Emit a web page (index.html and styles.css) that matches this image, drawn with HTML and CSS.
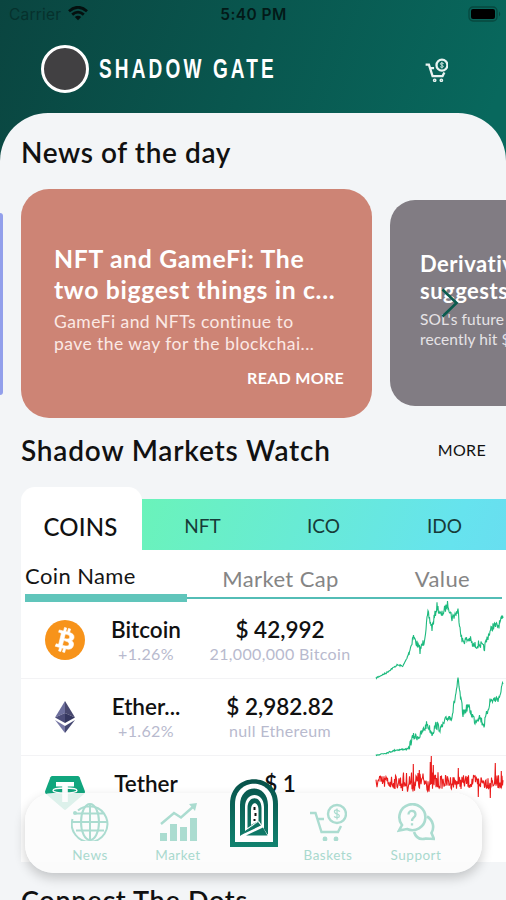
FILE: index.html
```html
<!DOCTYPE html>
<html lang="en">
<head>
<meta charset="utf-8">
<title>Shadow Gate</title>
<link rel="stylesheet" href="styles.css">
</head>
<body>
<div class="app">
  <div class="status">
    <div class="carrier"><span>Carrier</span>
      <svg width="20" height="15" viewBox="0 0 20 15" fill="none" stroke="#04100f" stroke-width="2.8"><path d="M1 5.2Q10-2.600 19 5.200M4.200 8.600Q10 3.600 15.800 8.600"/><path d="M10 14.200L6.800 11Q10 8.300 13.200 11Z" fill="#04100f" stroke="none"/></svg>
    </div>
    <div class="clock">5:40 PM</div>
    <svg class="battery" width="34" height="16" viewBox="0 0 34 16"><rect x="1" y="1" width="28" height="14" rx="4" fill="none" stroke="#07483f" stroke-width="1.300"/><rect x="3" y="3" width="24" height="10" rx="2" fill="#000"/><path d="M31 5.500q2.500 2.500 0 5z" fill="#07483f"/></svg>
  </div>
  <header class="header">
    <div class="avatar"></div>
    <div class="brand"><span>SHADOW GATE</span></div>
    <svg class="cart" width="23" height="24" viewBox="0 0 38 38" fill="none" stroke="#e9f3f1" stroke-width="3.800"><use href="#cart"/></svg>
  </header>
  <main class="sheet">
    <h2 class="title news-title">News of the day</h2>
    <section class="carousel">
      <article class="card prev"></article>
      <article class="card current">
        <h3>NFT and GameFi: The<br>two biggest things in c...</h3>
        <p>GameFi and NFTs continue to<br>pave the way for the blockchai...</p>
        <a>READ MORE</a>
      </article>
      <article class="card next">
        <h3>Derivativ<br>suggests</h3>
        <p>SOL's future<br>recently hit $</p>
        <svg class="arrow" width="18" height="30" viewBox="0 0 18 30" fill="none" stroke="#0b5b4e" stroke-width="2.600"><path d="M1.500 1.500L15.500 15L1.500 28.500"/></svg>
      </article>
    </section>
    <div class="markets-head"><h2 class="title">Shadow Markets Watch</h2><a>MORE</a></div>
    <section class="market">
      <div class="tabs">
        <div class="tab active">COINS</div>
        <div class="others"><div>NFT</div><div>ICO</div><div>IDO</div></div>
      </div>
      <div class="cols">
        <div class="col on">Coin Name</div><div class="col cap">Market Cap</div><div class="col val">Value</div>
      </div>
      <div class="row">
        <div class="logo"><svg width="40" height="40" viewBox="0 0 32 32"><circle cx="16" cy="16" r="16" fill="#f7931a"/><path fill="#fff" stroke="#fff" stroke-width=".5" d="M23.189 14.020c.314-2.096-1.283-3.223-3.465-3.975l.708-2.840-1.728-.430-.690 2.765c-.454-.114-.920-.220-1.385-.326l.695-2.783L15.596 6l-.708 2.839c-.376-.086-.746-.170-1.104-.260l.002-.009-2.384-.595-.460 1.846s1.283.294 1.256.312c.700.175.826.638.805 1.006l-.806 3.235c.048.012.110.030.180.057l-.183-.045-1.130 4.532c-.086.212-.303.531-.793.410.018.025-1.256-.313-1.256-.313l-.858 1.978 2.250.561c.418.105.828.215 1.231.318l-.715 2.872 1.727.430.708-2.840c.472.127.930.245 1.378.357l-.706 2.828 1.728.430.715-2.866c2.948.558 5.164.333 6.097-2.333.752-2.146-.037-3.385-1.588-4.192 1.130-.260 1.980-1.003 2.207-2.538zm-3.950 5.538c-.533 2.147-4.148.986-5.320.695l.950-3.805c1.172.293 4.929.872 4.370 3.110zm.535-5.569c-.487 1.953-3.495.960-4.470.717l.860-3.450c.975.243 4.118.696 3.610 2.733z"/></svg></div>
        <div class="name"><b>Bitcoin</b><i>+1.26%</i></div>
        <div class="price"><b>$ 42,992</b><i>21,000,000 Bitcoin</i></div>
        <svg class="chart" data-coin="btc" width="128" height="78"></svg>
      </div>
      <div class="row">
        <div class="logo"><svg width="20" height="32" viewBox="0 0 20 32"><path fill="#6d6f9d" d="M10 0L0 16.500L10 12z"/><path fill="#48486f" d="M10 0L20 16.500L10 12z"/><path fill="#4c4d79" d="M0 16.500L10 12V22z"/><path fill="#34365f" d="M20 16.500L10 12V22z"/><path fill="#7778a5" d="M0 19L10 25V32z"/><path fill="#454872" d="M20 19L10 25V32z"/></svg></div>
        <div class="name"><b>Ether...</b><i>+1.62%</i></div>
        <div class="price"><b>$ 2,982.82</b><i>null Ethereum</i></div>
        <svg class="chart" data-coin="eth" width="128" height="78"></svg>
      </div>
      <div class="row">
        <div class="logo"><svg width="40" height="34" viewBox="0 0 40 34"><path fill="#11a67e" d="M7.500 0H32.500Q34 0 34.600 1.200L40 15.500Q40 17 39 18L21 33.500Q20 34.300 19 33.500L1 18Q0 17 0 15.500L5.400 1.200Q6 0 7.500 0z"/><path d="M11 6H29V10.500H22.800V26H17.200V10.500H11z" fill="#fff"/><ellipse cx="20" cy="14.500" rx="12" ry="2.500" fill="none" stroke="#fff" stroke-width="1.300"/></svg></div>
        <div class="name"><b>Tether</b></div>
        <div class="price"><b>$ 1</b></div>
        <svg class="chart" data-coin="usdt" width="128" height="78"></svg>
      </div>
    </section>
    <h2 class="title dots">Connect The Dots</h2>
  </main>
  <nav class="nav">
    <div class="item"><svg width="38" height="38" viewBox="0 0 38 38" fill="none" stroke="#abdcd0" stroke-width="2"><path d="M7 7.500A17.800 17.800 0 1 1 1.500 16M1 19H37M19 1V37M5 10.500H33M5 27.500H33"/><ellipse cx="19" cy="19" rx="9" ry="18"/><circle cx="4" cy="10" r="1" fill="#abdcd0"/></svg><span>News</span></div>
    <div class="item"><svg width="38" height="38" viewBox="0 0 38 38" fill="#abdcd0"><path d="M1 30H8V38H1zM11 21H18V38H11zM21 24H28V38H21zM31 15H38V38H31z"/><path d="M2 21L15 10L22 14.500L35 3" fill="none" stroke="#abdcd0" stroke-width="2.400"/><path d="M30 1L38 0L36 8z"/></svg><span>Market</span></div>
    <div class="item gate"><svg width="48" height="68" viewBox="0 0 48 68" fill="none"><defs><linearGradient id="gg" gradientUnits="userSpaceOnUse" x1="0" y1="0" x2="0" y2="68"><stop stop-color="#075149"/><stop offset="1" stop-color="#11826f"/></linearGradient></defs><path d="M0 68V25C0-8 48-8 48 25V68z" fill="url(#gg)"/><path d="M5 63V25C5-2 43-2 43 25V63z" fill="#fff"/><path d="M10 57V26C10 4 38 4 38 26V56L28 44z" fill="url(#gg)"/><path d="M15 52V28C15 12 34 12 34 28V50L28 43z" fill="#fff"/><path d="M17.500 49V29C17.500 16 31.500 16 31.500 29V46L28 42z" fill="url(#gg)"/><path d="M21 46V31C21 22 28.500 22 28.500 31V42z" fill="#fff"/><path d="M24.500 28v3M25.500 34v3M24.500 40v2" stroke="#111" stroke-width="2"/><path d="M9 59L29 42L39 58z" fill="#fff"/><path d="M11 56L28 43L31 46.500zM16 56.500L33 48.500L37.500 56.500z" fill="url(#gg)"/></svg></div>
    <div class="item"><svg width="38" height="38" viewBox="0 0 38 38" fill="none" stroke="#abdcd0" stroke-width="2.400"><g id="cart"><path d="M1 10H6.500L12.500 29H29L32 23M9 16H15"/><circle cx="28" cy="11" r="9"/><path d="M31 8.500Q25 5.500 25.500 9Q26 11 28.500 11Q31 12 30 14Q28 15.500 25 13.500M28 5.500V16.500" stroke-width="1.300"/><circle cx="16" cy="36" r="1.200"/><circle cx="27" cy="36" r="1.200"/></g></svg><span>Baskets</span></div>
    <div class="item"><svg width="38" height="38" viewBox="0 0 38 38" fill="none" stroke="#abdcd0" stroke-width="2.600"><path d="M5 22A13 13 0 1 1 10 26L2 27.500z"/><path d="M30 13.500A12 12 0 0 1 34.500 30L37 36L29 35.500Q20 38 17 29"/><path d="M11.500 11.500C11.500 6.500 18.500 7 18.500 11.500C18.500 14.500 15 14.500 15 18M15 20.200V22.500" stroke-width="2.300"/></svg><span>Support</span></div>
  </nav>
</div>
<script src="charts.js"></script>
</body>
</html>
```
FILE: styles.css
```css
* { box-sizing: border-box; margin: 0; padding: 0; }
body { width: 506px; height: 900px; overflow: hidden; font-family: Lato, "Open Sans", sans-serif; color: #111; }
.app { position: relative; height: 900px; overflow: hidden; background: linear-gradient(110deg, #0a4540 0, #08685d 500px); }
.status { height: 28px; display: grid; grid-template-columns: 1fr 1fr 1fr; align-items: center; padding: 0 4px 0 9px; font-family: Inter, sans-serif; }
.carrier { display: flex; align-items: center; gap: 7px; font-size: 15.500px; color: #06312d; letter-spacing: .2px; }
.carrier svg { margin-top: -2px; }
.clock { text-align: center; font-weight: 600; font-size: 15.500px; letter-spacing: .4px; color: #031a18; margin-left: -4px; }
.battery { justify-self: end; }
.header { height: 85px; display: flex; align-items: center; padding: 0 58px 4px 41px; }
.avatar { width: 48px; height: 48px; border-radius: 50%; background: #414042; border: 3px solid #fff; }
.brand { width: 200px; margin-left: 10px; color: #fff; font: bold 28px/34px "Liberation Sans", sans-serif; }
.brand span { display: inline-block; white-space: nowrap; transform: scaleX(.68); transform-origin: left; letter-spacing: 4.600px; }
.cart { margin-left: auto; margin-top: 2px; }
.sheet { height: 787px; border-radius: 48px 48px 0 0; background: #f3f5f7; overflow: hidden; }
.title { font-size: 28px; line-height: 36px; font-weight: 600; letter-spacing: .8px; white-space: nowrap; }
.news-title { padding: 21px 21px 0; height: 76px; letter-spacing: .6px; }
.carousel { height: 229px; display: flex; align-items: center; }
.card { flex: none; color: #fff; white-space: nowrap; }
.card.prev { width: 3px; height: 182px; margin-right: 18px; background: #929feb; border-radius: 0 4px 4px 0; }
.card.current { width: 351px; height: 229px; border-radius: 28px; background: #cd8475; padding: 54px 28px 0 33px; }
.card.current h3 { font-size: 24.800px; line-height: 31px; letter-spacing: .65px; }
.card.current p { font-size: 17.500px; line-height: 21.500px; margin-top: 6px; letter-spacing: .45px; color: #fbe9e5; }
.card.current a { display: block; text-align: right; font-weight: 700; font-size: 16px; line-height: 20px; margin-top: 14px; letter-spacing: .3px; }
.card.next { position: relative; width: 116px; height: 206px; margin: -2px 0 0 18px; border-radius: 25px 0 0 25px; background: #817c83; padding: 50px 0 0 30px; overflow: hidden; }
.card.next h3 { font-size: 22px; line-height: 27px; letter-spacing: .5px; }
.card.next p { font-size: 15.500px; line-height: 20px; margin-top: 5px; letter-spacing: .1px; color: #e6e3e6; }
.arrow { position: absolute; left: 51px; top: 88px; }
.markets-head { height: 69px; padding: 14px 20px 0 21px; display: flex; justify-content: space-between; }
.markets-head a { font-size: 16px; line-height: 35px; letter-spacing: .3px; font-weight: 400; }
.market { margin-left: 21px; height: 374px; }
.tabs { height: 63px; display: flex; align-items: flex-end; }
.tab.active { width: 121px; height: 63px; border-radius: 14px 14px 0 0; background: #fff; text-align: center; font-size: 24px; line-height: 79px; font-weight: 500; letter-spacing: .2px; padding-right: 2px; }
.others { flex: 1; height: 51px; display: grid; grid-template-columns: repeat(3, 121px); background: linear-gradient(110deg, #6af3ba, #66e3ee 85%, #68def0); text-align: center; font-size: 19px; line-height: 53px; color: #173b38; }
.cols { height: 52px; background: #fff; padding: 0 4px; display: grid; grid-template-columns: 162px 187px 1fr; font-size: 22px; letter-spacing: .4px; color: #858585; }
.col { height: 49px; line-height: 57px; border-bottom: 2px solid #53bdb6; text-align: center; }
.col.on { height: 52px; line-height: 52px; text-align: left; color: #151515; border-bottom: 8px solid #60c5bb; }
.col.val { padding-left: 9px; }
.row { height: 77px; background: #fff; display: grid; grid-template-columns: 84px 78px 190px 128px; border-bottom: 1px solid #f3f3f5; padding-left: 2px; }
.logo { height: 76px; display: flex; align-items: center; justify-content: center; }
.name, .price { padding-top: 14px; text-align: center; white-space: nowrap; }
.row b, .row i { display: block; font-style: normal; }
.row b { font-size: 22.500px; line-height: 28px; font-weight: 600; }
.row i { font-size: 16px; line-height: 20px; color: #b8bace; letter-spacing: .35px; }
.chart { display: block; overflow: visible; margin-left: 1px; margin-top: -1px; }
.row:last-child { height: 106px; border: 0; }
.row:last-child .logo { height: 73px; }
.dots { padding: 21px 21px 0; font-size: 27px; letter-spacing: .7px; }
.nav { position: absolute; left: 25px; top: 793px; width: 457px; height: 80px; border-radius: 28px; background: rgba(251,252,252,.87); box-shadow: 0 5px 12px rgba(0,0,0,.2); display: grid; grid-template-columns: 88px 88px 64px 84px 92px; padding: 2px 0 0 21px; }
.nav .item { display: flex; flex-direction: column; align-items: center; padding-top: 8px; font-size: 13.500px; line-height: 18px; letter-spacing: .5px; color: #a9d9ce; }
.nav .item span { margin-top: 5px; }
.nav .gate { margin-top: -24px; }
```
FILE: charts.js
```js
const series = {
  btc: [[0,77],[10,72],[21,64],[27,65],[31,57],[35,45],[37,35],[44,49],[48,40],[52,13],[56,27],[61,5],[65,15],[72,3],[76,17],[82,10],[86,40],[94,38],[97,45],[104,43],[108,48],[112,35],[117,25],[122,25],[127,17]],
  eth: [[0,77],[10,75],[20,72],[32,71],[37,59],[44,58],[51,46],[56,55],[60,47],[65,51],[71,40],[76,38],[82,3],[87,36],[92,28],[99,43],[103,38],[108,47],[114,23],[123,20],[127,6]]
};
let seed = 7;
const rnd = () => (seed = (seed * 16807) % 2147483647) / 2147483647;

document.querySelectorAll('.chart').forEach(svg => {
  const coin = svg.dataset.coin;
  const points = [];
  if (coin === 'usdt') {
    const spikes = { 37: -18, 43: -12, 54: -20, 55: -26, 57: -17, 82: -14, 119: -19, 125: -11, 102: 15, 114: 16 };
    for (let x = 0; x <= 127; x += .5) {
      const amp = x < 25 || x > 62 ? 7 : 10;
      points.push([x, 27 + (rnd() - .5) * amp * 2]);
      if (spikes[x]) points.push([x + .3, 27 + spikes[x]], [x + .6, 29]);
    }
  } else {
    const s = series[coin];
    for (let i = 0; i < s.length - 1; i++) {
      const [x0, y0] = s[i], [x1, y1] = s[i + 1];
      for (let x = x0; x < x1; x += .5) {
        const noise = x < 33 ? 1.5 : 8;
        points.push([x, y0 + (y1 - y0) * (x - x0) / (x1 - x0) + (rnd() - .5) * noise]);
      }
    }
    points.push(s[s.length - 1]);
  }
  const line = document.createElementNS('http://www.w3.org/2000/svg', 'polyline');
  line.setAttribute('points', points.map(p => p.join(',')).join(' '));
  line.setAttribute('fill', 'none');
  line.setAttribute('stroke', coin === 'usdt' ? '#ea1c1c' : '#1dba7e');
  line.setAttribute('stroke-width', '1.1');
  svg.append(line);
});
```
